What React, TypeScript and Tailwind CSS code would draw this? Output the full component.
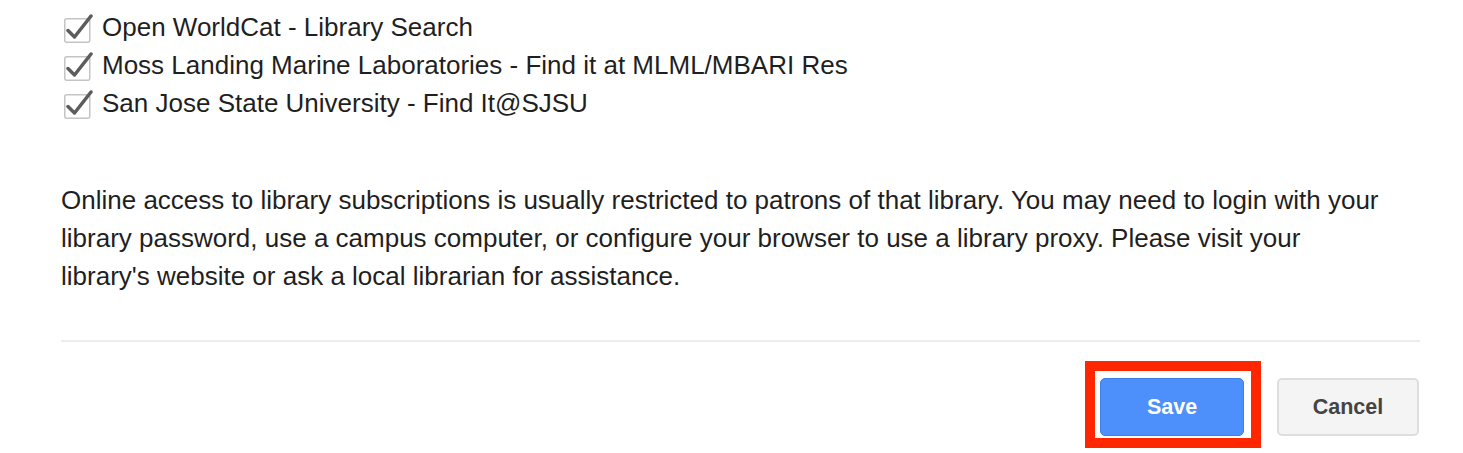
const libraries = [
  "Open WorldCat - Library Search",
  "Moss Landing Marine Laboratories - Find it at MLML/MBARI Res",
  "San Jose State University - Find It@SJSU",
];

function CheckIcon() {
  return (
    <svg width="30" height="32" viewBox="0 0 30 32" className="shrink-0">
      <rect x="1.75" y="7.75" width="25" height="23.5" rx="2" fill="#fff" stroke="#c4c4c4" strokeWidth="1.5" />
      <path d="M5 19.5 L11.5 26 L28 5" fill="none" stroke="#5c5c5c" strokeWidth="3.5" strokeLinecap="round" strokeLinejoin="round" />
    </svg>
  );
}

export default function App() {
  return (
    <div className="h-[453px] w-full overflow-hidden bg-white pl-[61px] pr-[43px] pt-[8px] font-['Liberation_Sans',Arial,sans-serif] text-[#1f1f1f]">
      <ul>
        {libraries.map((name) => (
          <li key={name} className="flex h-[38px] items-center gap-[10px] pl-[2px] text-[26px] leading-[38px]">
            <CheckIcon />
            <span className="-ml-[1px]">{name}</span>
          </li>
        ))}
      </ul>

      <p className="mt-[59px] w-[1330px] text-[26px] leading-[38px]">
        Online access to library subscriptions is usually restricted to patrons of that library. You may need to login with your
        library password, use a campus computer, or configure your browser to use a library proxy. Please visit your
        library&apos;s website or ask a local librarian for assistance.
      </p>

      <div className="mt-[45px] h-[2px] bg-[#ececec]" />

      <div className="mt-[19px] flex items-start justify-end gap-[16px] pr-[1px]">
        <div className="border-[10px] border-[#ff2600] pb-[2px] pl-[5px] pr-[7px] pt-[7px]">
          <button
            type="button"
            className="h-[58px] w-[144px] rounded-[5px] border border-[#3d7fe6] bg-[#4d90fb] text-[21.5px] font-bold text-white"
          >
            Save
          </button>
        </div>
        <button
          type="button"
          className="mt-[17px] h-[58px] w-[142px] rounded-[5px] border-2 border-[#dedede] bg-[#f4f4f4] text-[21.5px] font-bold text-[#444]"
        >
          Cancel
        </button>
      </div>
    </div>
  );
}
